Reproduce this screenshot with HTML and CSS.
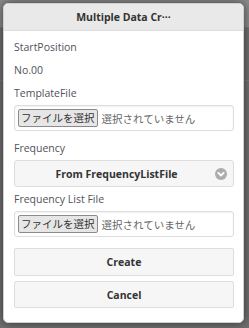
FILE: index.html
```html
<!DOCTYPE html>
<html lang="ja">
<head>
<meta charset="utf-8">
<link rel="stylesheet" href="styles.css">
</head>
<body>
<div class="dialog">
  <div class="header">Multiple Data Cr···</div>
  <div class="content">
    <div class="label">StartPosition</div>
    <div class="label">No.00</div>
    <div class="label">TemplateFile</div>
    <div class="file">
      <span class="file-btn">ファイルを選択</span>
      <span class="file-none">選択されていません</span>
    </div>
    <div class="label gap-top">Frequency</div>
    <div class="select">
      <span class="select-text">From FrequencyListFile</span>
      <svg class="select-icon" width="12" height="12" viewBox="0 0 12 12">
        <circle cx="6" cy="6" r="6" fill="#acacac"/>
        <path d="M3.3 4.8 L6 7.5 L8.7 4.8" fill="none" stroke="#fff" stroke-width="1.8" stroke-linecap="round" stroke-linejoin="round"/>
      </svg>
    </div>
    <div class="label label-tight">Frequency List File</div>
    <div class="file">
      <span class="file-btn">ファイルを選択</span>
      <span class="file-none">選択されていません</span>
    </div>
    <div class="btn btn-create">Create</div>
    <div class="btn btn-cancel">Cancel</div>
  </div>
</div>
</body>
</html>
```

FILE: styles.css
```css
html, body {
  margin: 0;
  padding: 0;
}
body {
  width: 249px;
  height: 328px;
  overflow: hidden;
  background:
    linear-gradient(#8a8a8a 0, #8a8a8a 27px, #7a7a7a 27px, #7a7a7a 28px, #6f6f6f 28px, #6f6f6f 80px, #7c7c7c 80px, #7c7c7c 81px, #6f6f6f 81px, #6f6f6f 100%);
  font-family: "Open Sans", "Noto Sans CJK JP", sans-serif;
  padding: 3px 0 0 3px;
  box-sizing: border-box;
}
.dialog {
  width: 241px;
  box-sizing: border-box;
  background: #fff;
  border: 1px solid #d0d0d0;
  border-radius: 5px;
  box-shadow: 0 0 10px rgba(0, 0, 0, 0.55);
  overflow: hidden;
}
.header {
  height: 26px;
  background: #e9e9e9;
  border-bottom: 1px solid #dddddd;
  color: #333;
  font-weight: bold;
  font-size: 10.5px;
  line-height: 26px;
  text-align: center;
}
.content {
  display: flex;
  flex-direction: column;
  padding: 5px 9px 14px 10px;
}
.label {
  height: 23px;
  line-height: 23px;
  font-size: 10.5px;
  color: #50525a;
}
.gap-top {
  margin-top: 6px;
}
.label-tight {
  margin-top: 1px;
}
.file {
  height: 26px;
  box-sizing: border-box;
  border: 1px solid #dddddd;
  border-radius: 3px;
  display: flex;
  align-items: center;
  padding-left: 3px;
  gap: 4px;
  font-family: "Noto Sans CJK JP", sans-serif;
  font-size: 10.5px;
  box-shadow: inset 0 1px 2px rgba(0,0,0,0.06);
}
.file-btn {
  height: 18px;
  box-sizing: border-box;
  line-height: 16px;
  padding: 0 2px;
  border: 1px solid #8a8a8a;
  border-radius: 2px;
  background: #e6e6e6;
  color: #333;
}
.file-none {
  color: #666;
}
.select {
  height: 27px;
  box-sizing: border-box;
  border: 1px solid #dddddd;
  border-radius: 3px;
  background: #f6f6f6;
  display: flex;
  align-items: center;
  justify-content: center;
  padding-right: 15px;
  position: relative;
  font-weight: bold;
  font-size: 10.5px;
  color: #333;
}
.select-icon {
  position: absolute;
  right: 6px;
  top: 7px;
}
.btn {
  height: 27px;
  box-sizing: border-box;
  border: 1px solid #dddddd;
  border-radius: 2px;
  background: #f6f6f6;
  display: flex;
  align-items: center;
  justify-content: center;
  font-weight: bold;
  font-size: 10.5px;
  color: #333;
}
.btn-create {
  margin-top: 11px;
  height: 28px;
}
.btn-cancel {
  margin-top: 5px;
}
```
